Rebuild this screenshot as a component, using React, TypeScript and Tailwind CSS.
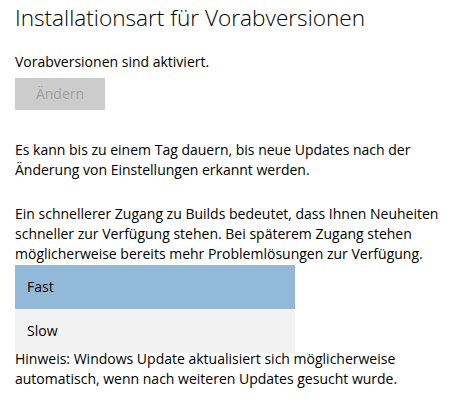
import React from "react";

export default function App() {
  return (
    <div className="w-[455px] h-[403px] bg-white overflow-hidden text-black pl-[15px]" style={{ fontFamily: '"Open Sans", "Noto Sans", sans-serif' }}>
      <h1 className="pt-[2px] text-[22.6px] leading-[32px] font-light whitespace-nowrap">Installationsart für Vorabversionen</h1>
      <p className="mt-[18px] text-[14px] leading-[20px]">Vorabversionen sind aktiviert.</p>
      <button className="mt-[6px] w-[90px] h-[32px] bg-[#cccccc] text-[#a0a0a0] text-[14px] leading-[20px] block">Ändern</button>
      <p className="mt-[30px] text-[14px] leading-[20px] whitespace-nowrap">
        Es kann bis zu einem Tag dauern, bis neue Updates nach der<br />
        Änderung von Einstellungen erkannt werden.
      </p>
      <p className="mt-[24px] text-[14px] leading-[20px] whitespace-nowrap">
        Ein schnellerer Zugang zu Builds bedeutet, dass Ihnen Neuheiten<br />
        schneller zur Verfügung stehen. Bei späterem Zugang stehen<br />
        möglicherweise bereits mehr Problemlösungen zur Verfügung.
      </p>
      <div className="relative h-[85px]">
        <div className="absolute left-0 top-[1px] w-[280px] z-10">
          <div className="h-[44px] bg-[#93b9d9] flex items-center pl-[12px] text-[14px] leading-[20px]">Fast</div>
          <div className="h-[44px] bg-[#f2f2f2] flex items-center pl-[12px] text-[14px] leading-[20px]">Slow</div>
        </div>
      </div>
      <p className="text-[14px] leading-[20px] whitespace-nowrap">
        Hinweis: Windows Update aktualisiert sich möglicherweise<br />
        automatisch, wenn nach weiteren Updates gesucht wurde.
      </p>
    </div>
  );
}
